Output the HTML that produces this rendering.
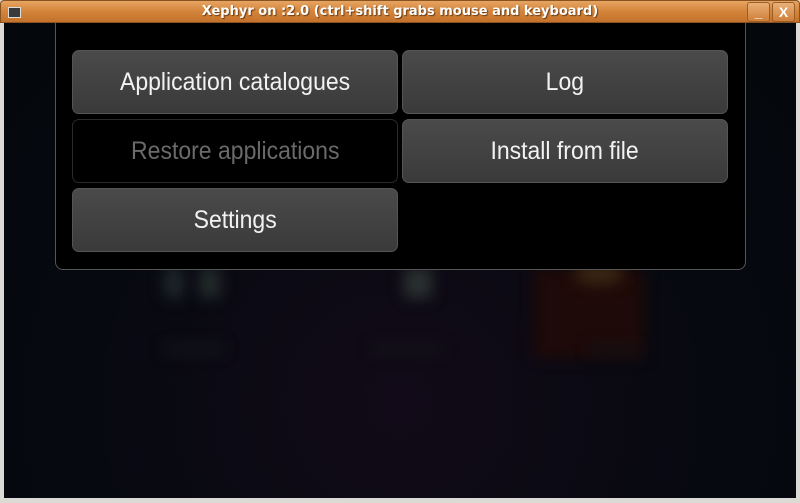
<!DOCTYPE html>
<html><head><meta charset="utf-8"><style>
*{margin:0;padding:0;box-sizing:border-box}
body{width:800px;height:503px;overflow:hidden;background:#dcdad5;font-family:"Liberation Sans",sans-serif;position:relative}
.title{position:absolute;left:0;top:0;width:800px;height:23px;background:linear-gradient(#e6a462,#d4843a 50%,#c4722c);border:1px solid #8a5220;border-radius:4px 4px 0 0}
.title .t{position:absolute;left:0;right:0;top:3px;text-align:center;color:#fff;font-family:"DejaVu Sans",sans-serif;font-weight:bold;font-size:13px;text-shadow:1px 1px 1px #6a3a10}
.ico{position:absolute;left:7px;top:6px;width:13px;height:11px;background:#3a3a3a;border:1px solid #ddd}
.wb{position:absolute;top:1px;width:23px;height:20px;border:1px solid #9a5e28;border-radius:3px;background:linear-gradient(#eab078,#cf7f38);color:#fff;font-weight:bold;font-size:14px;text-align:center;line-height:18px}
.content{position:absolute;left:4px;top:23px;width:792px;height:475px;background:radial-gradient(ellipse at 50% 80%,#120a18,#060910 60%,#04070b);overflow:hidden}
.blob{position:absolute;filter:blur(7px);}
.dialog{position:absolute;left:51px;top:-10px;width:691px;height:257px;background:#000;border:1px solid #555;border-radius:8px}
.btn{position:absolute;width:326px;height:64px;border-radius:7px;background:linear-gradient(#4a4a4a,#3a3a3a);border:1px solid #555;color:#f2f2f2;font-size:25px;text-align:center;line-height:62px;white-space:nowrap}
.btn span{display:inline-block;transform:scaleX(0.92)}
.dis{background:#000;border-color:#2a2a2a;color:#6a6a6a}
</style></head><body>
<div class="title"><div class="ico"></div><div class="t">Xephyr on :2.0 (ctrl+shift grabs mouse and keyboard)</div>
<div class="wb" style="left:746px">_</div><div class="wb" style="left:771px">X</div></div>
<div class="content">
<div class="blob" style="left:160px;top:245px;width:20px;height:30px;background:#1e2628"></div>
<div class="blob" style="left:195px;top:245px;width:22px;height:30px;background:#222a2a"></div>
<div class="blob" style="left:400px;top:245px;width:28px;height:30px;background:#2a3030"></div>
<div class="blob" style="left:530px;top:245px;width:110px;height:90px;background:#1e0a08"></div>
<div class="blob" style="left:570px;top:240px;width:50px;height:22px;background:#3a2612;border-radius:50%"></div>
<div class="blob" style="left:160px;top:322px;width:60px;height:8px;background:#14181c"></div>
<div class="blob" style="left:368px;top:322px;width:70px;height:8px;background:#14161c"></div>
<div class="blob" style="left:585px;top:322px;width:50px;height:8px;background:#141218"></div>
<div class="dialog">
<div class="btn" style="left:16px;top:36px"><span>Application catalogues</span></div>
<div class="btn" style="left:346px;top:36px"><span>Log</span></div>
<div class="btn dis" style="left:16px;top:105px"><span>Restore applications</span></div>
<div class="btn" style="left:346px;top:105px"><span>Install from file</span></div>
<div class="btn" style="left:16px;top:174px"><span>Settings</span></div>
</div>
</div>
</body></html>
